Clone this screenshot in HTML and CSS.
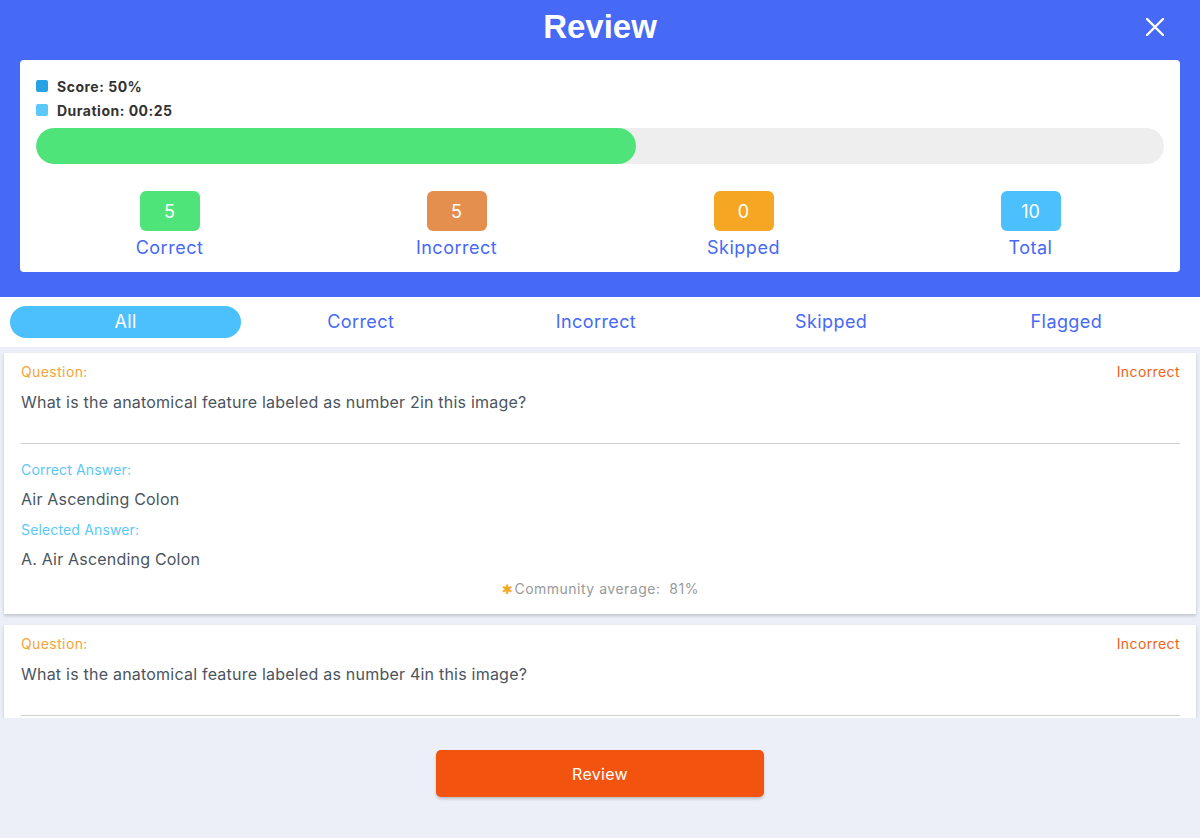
FILE: index.html
```html
<!DOCTYPE html>
<html>
<head>
<meta charset="utf-8">
<link rel="stylesheet" href="styles.css">
</head>
<body>
<div class="app">
  <header class="header">
    <div class="titlebar">
      <h1 class="title">Review</h1>
      <svg class="close" width="20" height="20" viewBox="0 0 20 20"><path d="M2 2 L18 18 M18 2 L2 18" stroke="#fff" stroke-width="2.4" stroke-linecap="round"/></svg>
    </div>
    <div class="summary">
      <div class="legend"><span class="sq sq-score"></span>Score: 50%</div>
      <div class="legend"><span class="sq sq-dur"></span>Duration: 00:25</div>
      <div class="bar"><div class="bar-fill" style="width:53.2%"></div></div>
      <div class="stats">
        <div class="stat"><div class="badge b-green">5</div><div class="stat-label">Correct</div></div>
        <div class="stat"><div class="badge b-orange">5</div><div class="stat-label">Incorrect</div></div>
        <div class="stat"><div class="badge b-yellow">0</div><div class="stat-label">Skipped</div></div>
        <div class="stat"><div class="badge b-blue">10</div><div class="stat-label">Total</div></div>
      </div>
    </div>
  </header>
  <nav class="tabs">
    <div class="tab active"><span>All</span></div>
    <div class="tab"><span>Correct</span></div>
    <div class="tab"><span>Incorrect</span></div>
    <div class="tab"><span>Skipped</span></div>
    <div class="tab"><span>Flagged</span></div>
  </nav>
  <main class="list">
    <section class="card">
      <div class="row"><span class="q-label">Question:</span><span class="status">Incorrect</span></div>
      <p class="q-text">What is the anatomical feature labeled as number 2in this image?</p>
      <hr class="divider">
      <div class="a-label">Correct Answer:</div>
      <p class="a-text">Air Ascending Colon</p>
      <div class="a-label">Selected Answer:</div>
      <p class="a-text">A. Air Ascending Colon</p>
      <div class="community"><span class="star">✱</span>Community average:&nbsp; 81%</div>
    </section>
    <section class="card card-cut">
      <div class="row"><span class="q-label">Question:</span><span class="status">Incorrect</span></div>
      <p class="q-text">What is the anatomical feature labeled as number 4in this image?</p>
      <hr class="divider">
    </section>
  </main>
  <footer class="footer">
    <button class="review-btn">Review</button>
  </footer>
</div>
</body>
</html>
```
FILE: styles.css
```css
* { box-sizing: border-box; }
html, body { margin: 0; padding: 0; }
body {
  width: 1200px;
  height: 838px;
  overflow: hidden;
  background: #ECEFF7;
  font-family: Inter, "Open Sans", "Liberation Sans", sans-serif;
}
.app { display: flex; flex-direction: column; height: 838px; }

.header {
  background: #4669F6;
  height: 297px;
  padding: 0 20px;
  display: flex;
  flex-direction: column;
}
.titlebar {
  height: 60px;
  display: flex;
  align-items: center;
  justify-content: center;
  position: relative;
}
.title {
  margin: 0;
  color: #fff;
  font-size: 33px;
  font-weight: 700;
  font-family: "Liberation Sans", Arial, sans-serif;
  line-height: 1;
  margin-top: -8px;
}
.close { position: absolute; right: 15px; top: 17px; }

.summary {
  background: #fff;
  border-radius: 4px;
  padding: 14px 16px 14px 16px;
  height: 212px;
}
.legend {
  display: flex;
  align-items: center;
  height: 24px;
  font-size: 14px;
  font-weight: 700;
  color: #333;
  letter-spacing: 0.5px;
}
.sq { width: 12px; height: 12px; border-radius: 2px; margin-right: 9px; }
.sq-score { background: #27A3E3; }
.sq-dur { background: #5BC8F8; }
.bar {
  margin-top: 6px;
  height: 36px;
  border-radius: 18px;
  background: #EEEEEE;
  overflow: hidden;
}
.bar-fill { height: 100%; background: #4FE47A; border-radius: 18px; }

.stats {
  display: grid;
  grid-template-columns: repeat(4, 1fr);
  margin: 27px -10px 0 -10px;
}
.stat { display: flex; flex-direction: column; align-items: center; }
.badge {
  width: 60px;
  height: 40px;
  border-radius: 6px;
  color: #fff;
  font-size: 18px;
  display: flex;
  align-items: center;
  justify-content: center;
}
.b-green { background: #4FE47A; }
.b-orange { background: #E58F4F; }
.b-yellow { background: #F5A623; }
.b-blue { background: #4BC0FD; }
.stat-label {
  margin-top: 6px;
  font-size: 18px;
  line-height: 22px;
  color: #4669F6;
  letter-spacing: 0.5px;
}

.tabs {
  background: #fff;
  height: 50px;
  display: grid;
  grid-template-columns: repeat(5, 235.2px);
  padding: 0 0 0 8px;
  align-items: center;
}
.tab {
  display: flex;
  justify-content: center;
  align-items: center;
  height: 32px;
  margin: 0 2px;
  font-size: 18px;
  line-height: 22px;
  padding-bottom: 1px;
  color: #4669F6;
  letter-spacing: 0.4px;
}
.tab.active { background: #4BC0FD; border-radius: 16px; color: #fff; }

.list {
  height: 371px;
  overflow: hidden;
  padding: 6px 4px 0 4px;
}
.card {
  background: #fff;
  padding: 10px 16px 15px 17px;
  margin-bottom: 11px;
  box-shadow: 0 2px 3px rgba(0,0,0,0.18);
}
.card-cut { padding-bottom: 3px; }
.row { display: flex; justify-content: space-between; font-size: 14px; line-height: 18px; letter-spacing: 0.4px; }
.q-label { color: #F7A33A; }
.status { color: #F2621A; }
.q-text {
  margin: 10px 0 30px 0;
  font-size: 16px;
  line-height: 22px;
  color: #4A5560;
  letter-spacing: 0.22px;
}
.divider { border: 0; border-top: 1px solid #D0D0D4; margin: 0; }
.a-label { margin-top: 17px; font-size: 14px; line-height: 18px; color: #5BC8F8; letter-spacing: 0.15px; }
.a-text { margin: 9px 0 0 0; font-size: 16px; line-height: 22px; color: #4A5560; letter-spacing: 0.2px; }
.a-text + .a-label { margin-top: 11px; }
.community {
  margin-top: 10px;
  text-align: center;
  font-size: 14px;
  line-height: 18px;
  color: #999;
  letter-spacing: 0.5px;
}
.star { color: #F5A623; font-size: 13px; margin-right: 1px; font-family: "DejaVu Sans", sans-serif; }

.footer {
  flex: 1;
  display: flex;
  justify-content: center;
  padding-top: 32px;
}
.review-btn {
  width: 328px;
  height: 47px;
  border: 0;
  border-radius: 5px;
  background: #F2540F;
  color: #fff;
  font-family: Inter, "Open Sans", sans-serif;
  font-size: 16px;
  letter-spacing: 0.3px;
  box-shadow: 0 2px 3px rgba(0,0,0,0.2);
}
```
